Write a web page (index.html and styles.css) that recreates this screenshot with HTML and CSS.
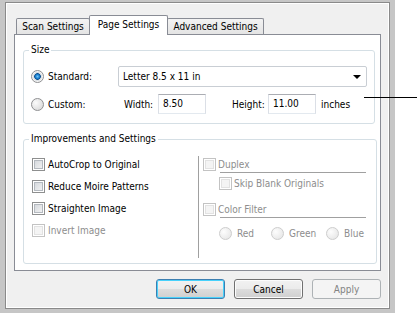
FILE: index.html
```html
<!DOCTYPE html>
<html lang="en">
<head>
    <meta charset="UTF-8">
    <title>Page Settings</title>
    <link rel="stylesheet" href="styles.css">
</head>
<body>
    <div class="dialog">
        <div class="frame">
            <div class="client">
                <!-- Tabs -->
                <div class="tabs">
                    <div class="tab tab-scan">Scan Settings</div>
                    <div class="tab tab-page active">Page Settings</div>
                    <div class="tab tab-adv">Advanced Settings</div>
                </div>

                <div class="panel">
                    <!-- Size -->
                    <fieldset class="group group-size">
                        <legend>Size</legend>
                        <div class="size-row">
                            <label class="opt"><span class="radio checked"></span>Standard:</label>
                            <div class="combo"><span>Letter 8.5 x 11 in</span><span class="arrow"></span></div>
                        </div>
                        <div class="size-row row-custom">
                            <label class="opt"><span class="radio"></span>Custom:</label>
                            <span class="field-label label-width">Width:</span>
                            <div class="textbox">8.50</div>
                            <span class="field-label label-height">Height:</span>
                            <div class="textbox">11.00</div>
                            <span class="unit">inches</span>
                        </div>
                    </fieldset>

                    <!-- Improvements -->
                    <fieldset class="group group-improve">
                        <legend>Improvements and Settings</legend>
                        <div class="columns">
                            <div class="col-left">
                                <div class="check-row"><span class="cb"></span>AutoCrop to Original</div>
                                <div class="check-row"><span class="cb"></span>Reduce Moire Patterns</div>
                                <div class="check-row"><span class="cb"></span>Straighten Image</div>
                                <div class="check-row disabled"><span class="cb"></span>Invert Image</div>
                            </div>
                            <div class="vsep"></div>
                            <div class="col-right disabled">
                                <div class="r-duplex"><span class="cb"></span>Duplex</div>
                                <div class="hline"></div>
                                <div class="r-skip"><span class="cb"></span>Skip Blank Originals</div>
                                <div class="r-color"><span class="cb"></span>Color Filter</div>
                                <div class="hline"></div>
                                <div class="r-radios">
                                    <span class="radio-item item-red"><span class="radio"></span>Red</span>
                                    <span class="radio-item item-green"><span class="radio"></span>Green</span>
                                    <span class="radio-item"><span class="radio"></span>Blue</span>
                                </div>
                            </div>
                        </div>
                    </fieldset>
                </div>

                <div class="buttons">
                    <button class="btn default">OK</button>
                    <button class="btn">Cancel</button>
                    <button class="btn" disabled>Apply</button>
                </div>
            </div>
        </div>
    </div>
    <div class="callout"></div>
</body>
</html>
```

FILE: styles.css
```css
body {
    margin: 0;
    background: #fff;
    font-family: "DejaVu Sans Condensed", "DejaVu Sans", sans-serif;
    font-stretch: condensed;
    font-size: 10px;
    color: #000;
}
.dialog {
    width: 395px;
    height: 313px;
    box-sizing: border-box;
    padding: 2px 5px 4px 5px;
    background: #c6c6c6;
}
.frame {
    height: 100%;
    box-sizing: border-box;
    border: 1px solid #8a8a8a;
}
.client {
    height: 100%;
    box-sizing: border-box;
    border: 1px solid #fff;
    background: #f0f0f0;
    padding: 11px 7px 0 7px;
}

/* tabs */
.tabs {
    display: flex;
    align-items: flex-end;
    height: 19px;
    margin-left: 2px;
}
.tab {
    box-sizing: border-box;
    height: 16px;
    line-height: 15px;
    border: 1px solid #898c95;
    border-bottom: none;
    border-radius: 2px 2px 0 0;
    background: linear-gradient(#f3f3f3, #e4e4e4);
    text-align: center;
}
.tab-scan { width: 74px; }
.tab-page { width: 79px; margin-left: -1px; }
.tab-adv { width: 97px; margin-left: -1px; }
.tab.active {
    position: relative;
    z-index: 1;
    height: 20px;
    line-height: 17px;
    margin-bottom: -1px;
    background: #fff;
}

.panel {
    box-sizing: border-box;
    width: 367px;
    height: 237px;
    border: 1px solid #898c95;
    background: #fff;
    padding: 9px 0 0 8px;
}

/* group boxes */
.group {
    box-sizing: border-box;
    margin: 0;
    padding: 0;
    border: 1px solid #d5dfe5;
    border-radius: 3px;
    min-width: 0;
}
.group legend {
    margin-left: 5px;
    padding: 0 2px;
    line-height: 12px;
}
.group-size {
    width: 352px;
    padding-top: 10px;
    padding-bottom: 9px;
}
.group-improve {
    width: 354px;
    margin-top: 9px;
    padding-top: 8px;
    padding-bottom: 4px;
}

.size-row {
    display: flex;
    align-items: center;
    height: 21px;
}
.row-custom {
    height: 20px;
    margin-top: 7px;
}
.opt {
    display: flex;
    align-items: center;
    width: 94px;
    box-sizing: border-box;
    padding-left: 7px;
    height: 100%;
}
.opt .radio { margin-right: 4px; }

.combo {
    box-sizing: border-box;
    width: 249px;
    height: 21px;
    border: 1px solid #c9ced4;
    border-radius: 2px;
    background: #fff;
    display: flex;
    align-items: center;
    justify-content: space-between;
    padding: 0 4px 0 4px;
}
.arrow {
    width: 0;
    height: 0;
    border-left: 4px solid transparent;
    border-right: 4px solid transparent;
    border-top: 4px solid #000;
    margin-right: 1px;
}

.field-label { display: inline-block; }
.label-width { width: 34px; margin-left: 6px; }
.label-height { width: 36px; margin-left: 26px; }
.textbox {
    box-sizing: border-box;
    width: 48px;
    height: 20px;
    line-height: 18px;
    border: 1px solid #dbdfe6;
    border-top-color: #abadb3;
    border-bottom-color: #e3e9ef;
    padding-left: 4px;
    background: #fff;
}
.unit { margin-left: 5px; }

/* checkbox + radio glyphs */
.cb {
    display: inline-block;
    box-sizing: border-box;
    width: 13px;
    height: 13px;
    border: 1px solid #8e8f8f;
    background: linear-gradient(135deg, #cfd3d8, #f7f7f7);
    box-shadow: inset 0 0 0 1px #fff, inset 0 0 0 2px #b4b9bf;
    flex: none;
}
.radio {
    display: inline-block;
    box-sizing: border-box;
    width: 13px;
    height: 13px;
    border-radius: 50%;
    border: 1px solid #8f9092;
    background: radial-gradient(circle at 35% 35%, #fbfbfb, #d3d3d3);
    flex: none;
}
.radio.checked {
    background: radial-gradient(circle at 50% 50%, #6fc4f5 0, #1a7fcf 2px, #0c4f8f 3px, #cfd6dc 3.6px, #f4f4f4 5px);
}
.disabled { color: #8d8d8d; }
.disabled .cb {
    border-color: #c3c3c3;
    background: #f4f4f4;
    box-shadow: inset 0 0 0 1px #fff, inset 0 0 0 2px #e2e2e2;
}
.disabled .radio {
    border-color: #cdcdcd;
    background: radial-gradient(circle at 35% 35%, #fdfdfd, #e2e2e2);
}

/* improvements columns */
.columns {
    display: flex;
    height: 106px;
}
.col-left {
    width: 174px;
    box-sizing: border-box;
    padding-left: 8px;
}
.check-row {
    display: flex;
    align-items: center;
    height: 22px;
}
.check-row .cb { margin-right: 3px; }
.vsep {
    width: 1px;
    background: #a0a0a0;
    margin: 3px 0 1px 0;
}
.col-right {
    display: flex;
    flex-direction: column;
    margin-left: 4px;
    padding-top: 3px;
}
.r-duplex, .r-skip, .r-color, .r-radios {
    display: flex;
    align-items: center;
}
.r-duplex { height: 16px; }
.r-duplex .cb, .r-color .cb { margin-right: 2px; }
.r-skip { height: 21px; margin-left: 16px; }
.r-skip .cb { margin-right: 2px; }
.r-color { height: 16px; margin-top: 7px; }
.r-radios { height: 16px; margin-top: 7px; padding-left: 16px; }
.hline {
    width: 146px;
    height: 1px;
    margin-left: 17px;
    background: #a0a0a0;
}
.radio-item {
    display: flex;
    align-items: center;
}
.radio-item .radio { margin-right: 5px; }
.item-red { width: 52px; }
.item-green { width: 55px; }

/* buttons */
.buttons {
    display: flex;
    justify-content: flex-end;
    gap: 9px;
    margin-top: 8px;
}
.btn {
    box-sizing: border-box;
    width: 69px;
    height: 20px;
    padding: 0;
    font-family: inherit;
    font-stretch: condensed;
    font-size: 10px;
    color: #000;
    border: 1px solid #707070;
    border-radius: 3px;
    background: linear-gradient(#f2f2f2 0, #ebebeb 50%, #dddddd 50%, #cfcfcf 100%);
    box-shadow: inset 0 0 0 1px #fcfcfc;
}
.btn.default {
    border-color: #3c7fb1;
    box-shadow: inset 0 0 0 1px #48d1fb;
}
.btn:disabled {
    border-color: #adb2b5;
    background: #f4f4f4;
    color: #838383;
    box-shadow: none;
}

/* annotation pointer line */
.callout {
    position: absolute;
    left: 364px;
    top: 97px;
    width: 53px;
    height: 1px;
    background: #000;
}
```
